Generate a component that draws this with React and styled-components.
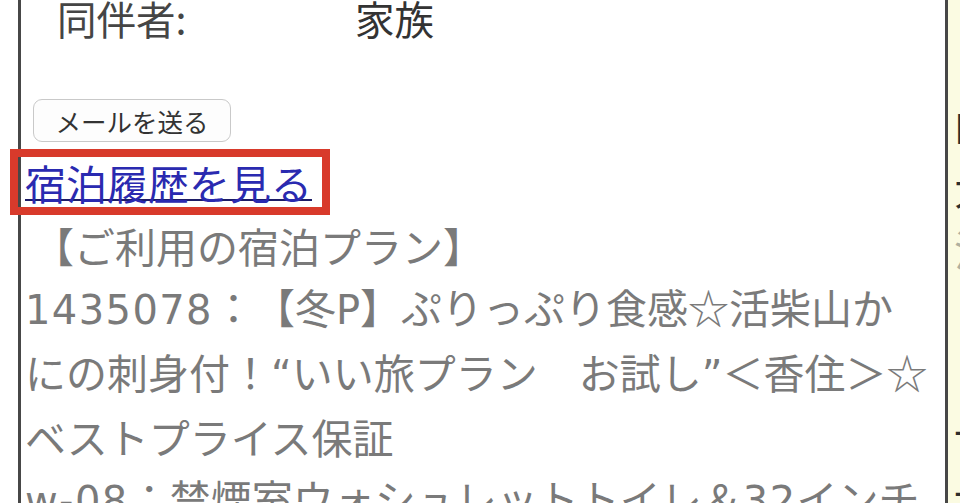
import React from 'react';
import styled, { createGlobalStyle } from 'styled-components';

const Global = createGlobalStyle`
  html, body { margin: 0; padding: 0; background: #fff; }
  body {
    font-family: "Noto Sans CJK JP", "Noto Sans", sans-serif;
    overflow: hidden;
    text-spacing-trim: space-all;
  }
`;

const Page = styled.div`
  display: flex;
  width: 960px;
  height: 503px;
  overflow: hidden;
  background: #fff;
`;

const Gutter = styled.div`
  flex: none;
  width: 18px;
  background: #fff;
`;

const Panel = styled.main`
  flex: none;
  box-sizing: border-box;
  width: 930px;
  height: 503px;
  border-left: 3px solid #474747;
  border-right: 3px solid #474747;
  background: #fff;
  padding-left: 4px;
  display: flex;
  flex-direction: column;
  align-items: flex-start;
  & > * { flex: none; }
`;

const CompanionRow = styled.div`
  display: flex;
  height: 40px;
  padding-left: 32px;
  font-size: 39.5px;
  line-height: 36px;
  white-space: nowrap;
`;

const Label = styled.span`
  width: 298px;
  color: #454545;
`;

const Value = styled.span`
  color: #333;
`;

const MailButton = styled.button`
  margin: 59px 0 0 8px;
  box-sizing: border-box;
  width: 198px;
  height: 43px;
  padding: 0;
  border: 1.5px solid #c9c9c9;
  border-radius: 9px;
  background: #fdfdfd;
  color: #333;
  font-family: "Noto Sans CJK JP", sans-serif;
  font-size: 25.5px;
  line-height: 1;
  display: flex;
  align-items: center;
  justify-content: center;
`;

const Highlight = styled.div`
  position: relative;
  margin: 7px 0 0 -15px;
  border: 8px solid #d83a2b;
  padding: 0 10px 0 7px;
  height: 50px;
  display: flex;
  align-items: center;
`;

const HistoryLink = styled.a`
  font-size: 41px;
  line-height: 49px;
  color: #2a2ab0;
  text-decoration: underline;
  text-decoration-color: #1c1c66;
  text-decoration-thickness: 2px;
  text-underline-offset: -1px;
  white-space: nowrap;
`;

const PlanBlock = styled.div`
  font-size: 41px;
  line-height: 61px;
  color: #7a7a7a;
  width: 920px;
`;

const PlanLine = styled.div`
  white-space: nowrap;
`;

const Heading = styled(PlanLine)`
  padding-left: 8px;
`;

const Latin = styled.span`
  font-family: "DejaVu Sans", sans-serif;
  font-size: 40px;
  letter-spacing: ${p => (p.$wide ? '1.4px' : '0')};
`;

const Side = styled.aside`
  flex: none;
  width: 12px;
  height: 503px;
  overflow: hidden;
  background: #fbfbe2;
  padding-left: 6px;
  box-sizing: border-box;
  font-size: 41px;
  line-height: 61px;
  padding-top: 96px;
  white-space: nowrap;
  display: flex;
  flex-direction: column;
`;

const SideLine = styled.div`
  flex: none;
  height: 61px;
  color: ${p => (p.$muted ? '#b0b0a0' : '#2e2e2e')};
`;

export default function App() {
  return (
    <>
      <Global />
      <Page>
        <Gutter />
        <Panel>
          <CompanionRow>
            <Label>同伴者:</Label>
            <Value>家族</Value>
          </CompanionRow>
          <MailButton type="button">メールを送る</MailButton>
          <Highlight>
            <HistoryLink href="#">宿泊履歴を見る</HistoryLink>
          </Highlight>
          <PlanBlock>
            <Heading>【ご利用の宿泊プラン】</Heading>
            <PlanLine>
              <Latin $wide>1435078</Latin>：【冬<Latin>P</Latin>】ぷりっぷり食感☆活柴山か
            </PlanLine>
            <PlanLine>
              にの刺身付！<Latin>“</Latin>いい旅プラン　お試し<Latin>”</Latin>＜香住＞☆
            </PlanLine>
            <PlanLine>ベストプライス保証</PlanLine>
            <PlanLine>
              <Latin $wide>w-08</Latin>：禁煙室ウォシュレットトイレ＆<Latin $wide>32</Latin>インチ
            </PlanLine>
          </PlanBlock>
        </Panel>
        <Side>
          <SideLine>L</SideLine>
          <SideLine>大</SideLine>
          <SideLine $muted>注</SideLine>
          <SideLine />
          <SideLine />
          <SideLine>一</SideLine>
          <SideLine>一</SideLine>
        </Side>
      </Page>
    </>
  );
}
